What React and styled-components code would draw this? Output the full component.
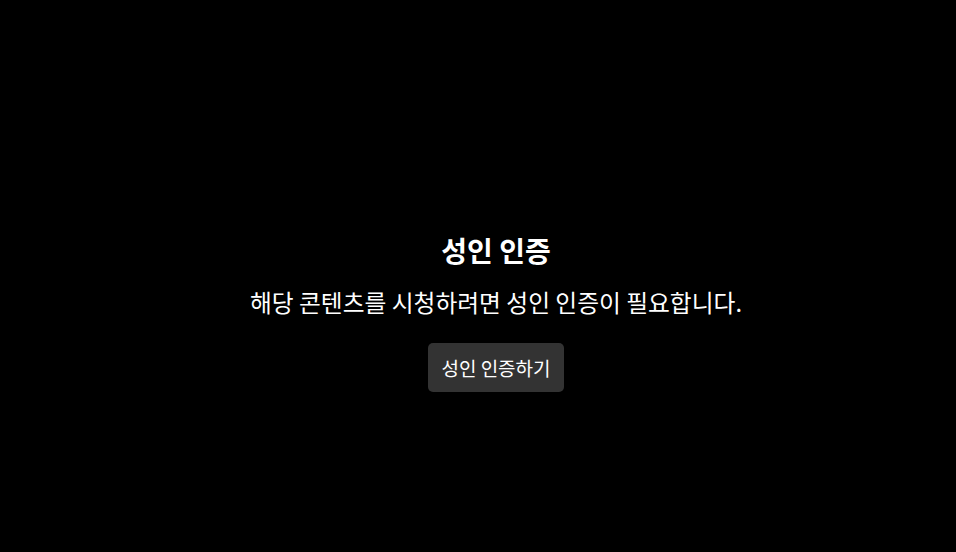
import styled, { createGlobalStyle } from "styled-components";

const GlobalStyle = createGlobalStyle`
  html, body {
    margin: 0;
    padding: 0;
    background: #000;
  }
  body {
    font-family: "Noto Sans CJK KR", "Noto Sans", sans-serif;
    color: #fff;
  }
`;

const Screen = styled.div`
  width: 100vw;
  height: 100vh;
  box-sizing: border-box;
  padding: 73px 0 0 36px;
  display: flex;
  align-items: center;
  justify-content: center;
  background: #000;
`;

const Gate = styled.div`
  display: flex;
  flex-direction: column;
  align-items: center;
  text-align: center;
`;

const Title = styled.h2`
  margin: 0 0 20px;
  font-size: 28px;
  font-weight: 700;
  line-height: 34px;
`;

const Message = styled.p`
  margin: 0 0 27px;
  font-size: 23.75px;
  line-height: 29px;
`;

const VerifyButton = styled.button`
  font-family: inherit;
  font-size: 19px;
  line-height: 23px;
  color: #fff;
  background: #333;
  border: none;
  border-radius: 5px;
  padding: 13px 13px;
  cursor: pointer;

  &:hover {
    background: #444;
  }
`;

export default function App() {
  return (
    <>
      <GlobalStyle />
      <Screen>
        <Gate>
          <Title>성인 인증</Title>
          <Message>해당 콘텐츠를 시청하려면 성인 인증이 필요합니다.</Message>
          <VerifyButton>성인 인증하기</VerifyButton>
        </Gate>
      </Screen>
    </>
  );
}
